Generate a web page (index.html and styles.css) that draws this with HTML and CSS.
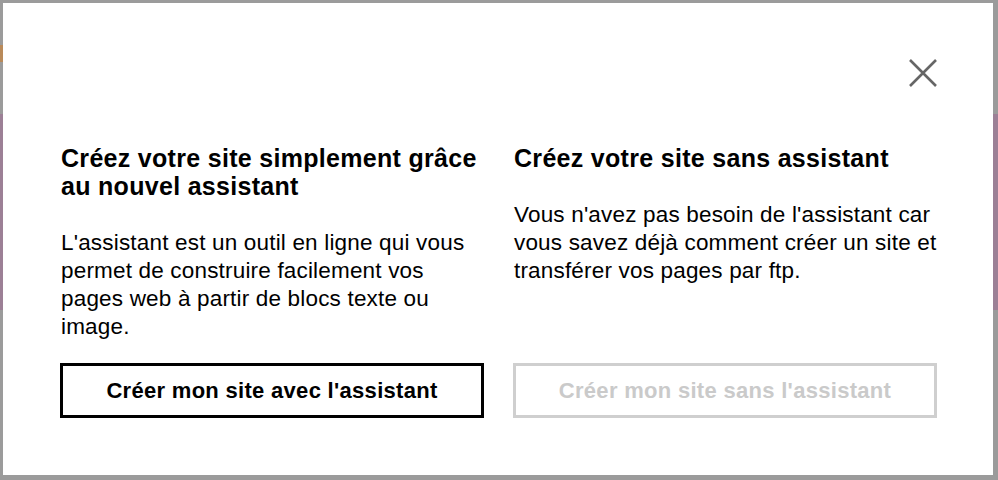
FILE: index.html
```html
<!DOCTYPE html>
<html lang="fr">
<head>
<meta charset="utf-8">
<title>Créer un site</title>
<link rel="stylesheet" href="styles.css">
</head>
<body>
<div class="modal">
  <div class="modal-head">
    <button class="close" aria-label="Fermer">
      <svg width="28" height="28" viewBox="0 0 28 28"><path d="M1 1 L27 27 M27 1 L1 27" stroke="#666" stroke-width="2.6" fill="none"/></svg>
    </button>
  </div>
  <div class="choices">
    <div class="choice">
      <h2 class="title">Créez votre site simplement grâce au nouvel assistant</h2>
      <p class="text">L'assistant est un outil en ligne qui vous permet de construire facilement vos pages web à partir de blocs texte ou image.</p>
    </div>
    <div class="choice">
      <h2 class="title">Créez votre site sans assistant</h2>
      <p class="text">Vous n'avez pas besoin de l'assistant car vous savez déjà comment créer un site et transférer vos pages par ftp.</p>
    </div>
    <button class="btn">Créer mon site avec l'assistant</button>
    <button class="btn btn-disabled" disabled>Créer mon site sans l'assistant</button>
  </div>
</div>
</body>
</html>
```
FILE: styles.css
```css
html, body {
  margin: 0;
  padding: 0;
}
body {
  width: 998px;
  height: 480px;
  box-sizing: border-box;
  padding: 3px 5px 5px 3px;
  background:
    linear-gradient(#b98a5a, #b98a5a) 0 45px / 3px 17px no-repeat,
    linear-gradient(#9c8096, #9c8096) 0 114px / 100% 196px no-repeat,
    #9b9b9b;
  font-family: "Liberation Sans", Arial, Helvetica, sans-serif;
  color: #000;
}
.modal {
  background: #fff;
  height: 472px;
  box-sizing: border-box;
  padding: 56px 56px 0 57px;
}
.modal-head {
  display: flex;
  justify-content: flex-end;
  height: 28px;
}
.close {
  width: 28px;
  height: 28px;
  padding: 0;
  border: 0;
  background: none;
  cursor: pointer;
}
.close svg {
  display: block;
}
.choices {
  margin-top: 57px;
  display: grid;
  grid-template-columns: 424px 424px;
  column-gap: 29px;
  row-gap: 22px;
}
.title {
  margin: 0;
  font-size: 25px;
  line-height: 28px;
  font-weight: bold;
  letter-spacing: 0.3px;
  padding-left: 1px;
}
.text {
  margin: 29px 0 0;
  font-size: 22.5px;
  line-height: 28px;
  letter-spacing: 0.18px;
  padding-left: 1px;
}
.btn {
  height: 55px;
  border: 3px solid #000;
  background: #fff;
  color: #000;
  font-family: "Liberation Sans", Arial, Helvetica, sans-serif;
  font-size: 22px;
  font-weight: bold;
  letter-spacing: 0.3px;
  padding: 0;
}
.btn-disabled {
  border-color: #cfcfcf;
  color: #cacaca;
}
```
